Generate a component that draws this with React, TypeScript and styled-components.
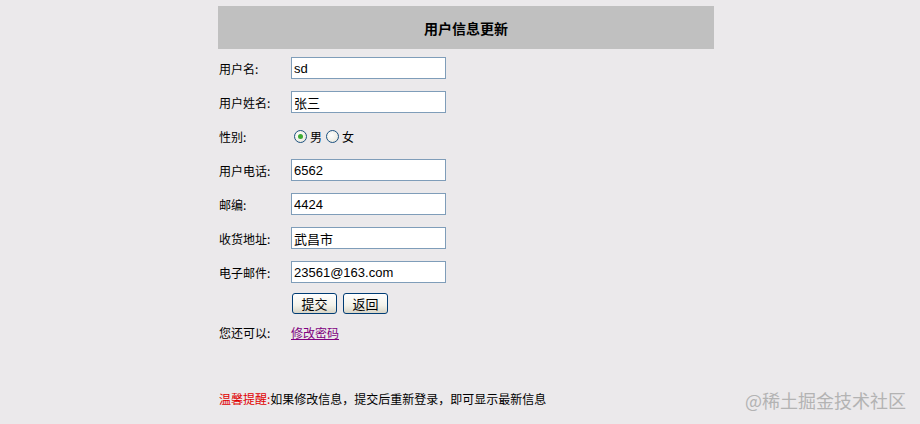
import React from "react";
import styled, { createGlobalStyle } from "styled-components";

const Global = createGlobalStyle`
  html, body { margin: 0; padding: 0; background: #ebe9eb; }
  body { width: 920px; height: 424px; overflow: hidden; position: relative;
    font-family: "Noto Sans CJK SC", "Liberation Sans", sans-serif; font-size: 12px; color: #000; }
`;

const Wrapper = styled.div`
  margin-left: 218px;
  padding-top: 6px;
  width: 496px;
`;

const Header = styled.div`
  height: 43px;
  background: #c0c0c0;
  display: flex;
  align-items: center;
  justify-content: center;
  font-weight: bold;
  font-size: 14px;
`;

const Form = styled.div`
  margin-top: 2px;
  display: grid;
  grid-template-columns: 73px 1fr;
`;

const Row = styled.div<{ $h?: number }>`
  display: contents;
  & > * { height: ${(p) => p.$h ?? 34}px; }
`;

const Label = styled.div`
  display: flex;
  align-items: center;
  padding-left: 1px;
  font-size: 12px;
`;

const Cell = styled.div<{ $gap?: number }>`
  display: flex;
  align-items: center;
  gap: ${(p) => p.$gap ?? 6}px;
`;

const Input = styled.input`
  box-sizing: border-box;
  width: 155px;
  height: 22px;
  border: 1px solid #7f9db9;
  background: #fff;
  padding: 0 2px;
  font-family: "Liberation Sans", "Noto Sans CJK SC", sans-serif;
  font-size: 13px;
  color: #000;
  outline: none;
`;

const RadioLabel = styled.label<{ $first?: boolean }>`
  display: inline-flex;
  align-items: center;
  gap: 3px;
  font-size: 12px;
  margin-left: ${(p) => (p.$first ? 3 : 0)}px;
`;

const RadioCircle = styled.span<{ $checked?: boolean }>`
  box-sizing: border-box;
  width: 13px;
  height: 13px;
  border-radius: 50%;
  border: 1px solid #1c5180;
  background: radial-gradient(circle at 40% 40%, #fff 0%, #f0efe6 60%, #dcdad0 100%);
  display: inline-flex;
  align-items: center;
  justify-content: center;
  &::after {
    content: "";
    display: ${(p) => (p.$checked ? "block" : "none")};
    width: 5px;
    height: 5px;
    border-radius: 50%;
    background: #3daa32;
  }
`;

const Button = styled.button`
  box-sizing: border-box;
  width: 45px;
  height: 21px;
  border: 1px solid #003c74;
  border-radius: 3px;
  background: linear-gradient(#ffffff, #f3f2ea 60%, #d8d5c7);
  font-family: "Noto Sans CJK SC", sans-serif;
  font-size: 13px;
  line-height: 1;
  padding: 0;
  color: #000;
`;

const ButtonCell = styled(Cell)`
  padding-left: 1px;
`;

const Link = styled.a`
  color: #800080;
  text-decoration: underline;
  font-size: 12px;
`;

const Tip = styled.div`
  margin-top: 43px;
  padding-left: 1px;
  font-size: 12px;
`;

const Red = styled.span`
  color: #e00000;
`;

const Watermark = styled.div`
  position: absolute;
  right: 14px;
  top: 387px;
  font-size: 18px;
  color: #b3b3b3;
  font-family: "Noto Sans CJK SC", sans-serif;
`;

export default function App() {
  const fields: [string, string][] = [
    ["用户电话:", "6562"],
    ["邮编:", "4424"],
    ["收货地址:", "武昌市"],
    ["电子邮件:", "23561@163.com"],
  ];
  return (
    <>
      <Global />
      <Wrapper>
        <Header>用户信息更新</Header>
        <Form>
          <Row>
            <Label>用户名:</Label>
            <Cell><Input defaultValue="sd" /></Cell>
          </Row>
          <Row>
            <Label>用户姓名:</Label>
            <Cell><Input defaultValue="张三" /></Cell>
          </Row>
          <Row>
            <Label>性别:</Label>
            <Cell $gap={4}>
              <RadioLabel $first><RadioCircle $checked />男</RadioLabel>
              <RadioLabel><RadioCircle />女</RadioLabel>
            </Cell>
          </Row>
          {fields.map(([l, v]) => (
            <Row key={l}>
              <Label>{l}</Label>
              <Cell><Input defaultValue={v} /></Cell>
            </Row>
          ))}
          <Row $h={28}>
            <Label />
            <ButtonCell>
              <Button>提交</Button>
              <Button>返回</Button>
            </ButtonCell>
          </Row>
          <Row $h={30}>
            <Label>您还可以:</Label>
            <Cell><Link href="#">修改密码</Link></Cell>
          </Row>
        </Form>
        <Tip><Red>温馨提醒:</Red>如果修改信息，提交后重新登录，即可显示最新信息</Tip>
      </Wrapper>
      <Watermark>@稀土掘金技术社区</Watermark>
    </>
  );
}
